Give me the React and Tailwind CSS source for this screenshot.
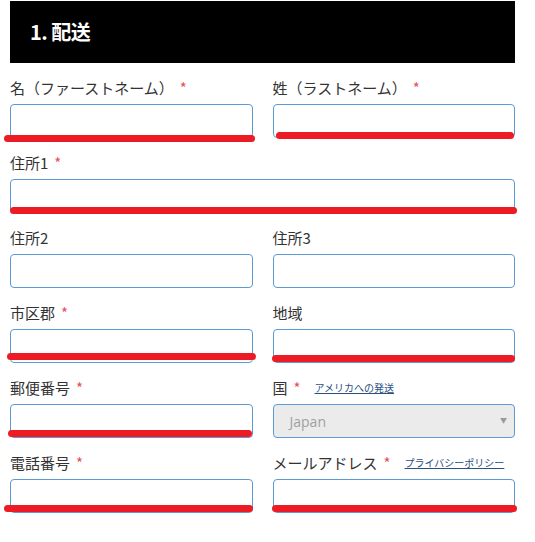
import React from 'react';

const font = { fontFamily: '"Noto Sans CJK JP", "Noto Sans", sans-serif' };

function Label({ text, required, link }) {
    return (
        <div className="flex items-center h-[20px] mb-[6px] text-[15px] text-[#333] leading-[20px]">
            <span>{text}</span>
            {required && <span className="ml-[6px] text-[#e8505b]">*</span>}
            {link && (
                <a href="#" className="ml-[14px] text-[10px] text-[#2a4f80] underline">{link}</a>
            )}
        </div>
    );
}

function Field({ label, required, link, marked, wide }) {
    return (
        <div className={`relative ${wide ? 'col-span-2' : ''}`}>
            <Label text={label} required={required} link={link}/>
            <input className="block w-full h-[34px] rounded-[4px] border border-[#5b9bd5] bg-white outline-none"/>
            {marked && (
                <div className={`absolute h-[7px] rounded-full bg-[#ed1c24] ${marked}`}/>
            )}
        </div>
    );
}

export default function App() {
    return (
        <div className="w-[535px] h-[542px] bg-white overflow-hidden" style={font}>
            <div className="mx-[10px] mt-px w-[505px] h-[62px] bg-black flex items-center px-[20px]">
                <h2 className="text-white text-[20px] font-bold tracking-tight">1. 配送</h2>
            </div>
            <div className="mt-[15px] ml-[10px] w-[505px] grid grid-cols-2 gap-x-[20px] gap-y-[15px]">
                <Field label="名（ファーストネーム）" required marked="top-[57px] -left-[6px] w-[251px]"/>
                <Field label="姓（ラストネーム）" required marked="top-[54px] left-[3px] w-[238px]"/>
                <Field label="住所1" required wide marked="top-[54px] left-0 w-[507px]"/>
                <Field label="住所2"/>
                <Field label="住所3"/>
                <Field label="市区郡" required marked="top-[50px] -left-[3px] w-[249px]"/>
                <Field label="地域" marked="top-[52px] -left-[1px] w-[243px]"/>
                <Field label="郵便番号" required marked="top-[52px] -left-[2px] w-[244px]"/>
                <div>
                    <Label text="国" required link="アメリカへの発送"/>
                    <div className="relative h-[34px] rounded-[4px] border border-[#5b9bd5] bg-[#ebebeb] flex items-center pl-[16px]">
                        <span className="text-[14px] text-[#a0a0a0]" style={{fontFamily: '"Open Sans", sans-serif'}}>Japan</span>
                        <span className="absolute right-[7px] top-[10px] text-[7px] text-[#999]">▼</span>
                    </div>
                </div>
                <Field label="電話番号" required marked="top-[52px] -left-[6px] w-[249px]"/>
                <Field label="メールアドレス" required link="プライバシーポリシー" marked="top-[52px] -left-[1px] w-[245px]"/>
            </div>
        </div>
    );
}
